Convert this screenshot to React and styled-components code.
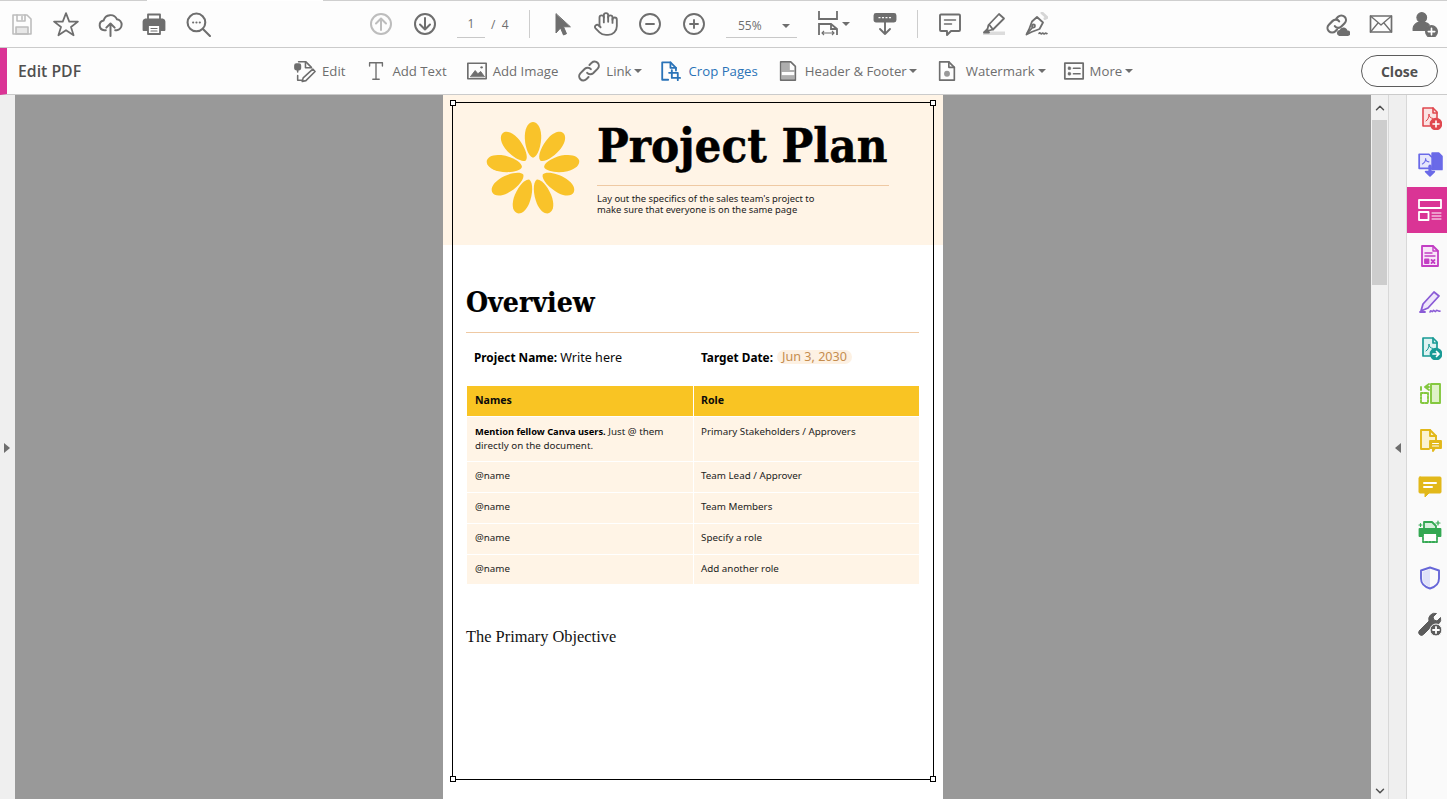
import React from "react"
import styled, { createGlobalStyle } from "styled-components"
import { Hand, CircleMinus, CirclePlus, ChevronUp, ChevronDown } from "lucide-react"

const GREY = "#6e6e6e"
const CREAM = "#fff4e6"
const SANS = `"Open Sans", "Liberation Sans", sans-serif`
const DOC_SANS = `"Noto Sans", "Open Sans", sans-serif`
const DOC_SERIF = `"DejaVu Serif Condensed", "DejaVu Serif", serif`
const BODY_SERIF = `"Liberation Serif", serif`

const GlobalStyle = createGlobalStyle`
  html, body, #root {
    margin: 0;
    height: 100%;
    overflow: hidden;
  }

  * {
    box-sizing: border-box;
  }
`

const Window = styled.div`
  width: 1447px;
  height: 799px;
  display: flex;
  flex-direction: column;
  background: #fff;
  font-family: ${SANS};
  overflow: hidden;
`

const TabEdge = styled.div`
  display: flex;
  height: 1px;
  flex: none;
`

const TabEdgePart = styled.div`
  width: ${(p) => p.$width};
  flex: ${(p) => (p.$grow ? 1 : "none")};
  background: ${(p) => (p.$line ? "#cfcfcf" : "transparent")};
`

const TopBar = styled.div`
  display: flex;
  align-items: center;
  height: 47px;
  flex: none;
  background: #fdfdfd;
  border-bottom: 1px solid #cbcbcb;
`

const IconButton = styled.div`
  width: ${(p) => p.$width || 44}px;
  height: 46px;
  margin-left: ${(p) => p.$ml || 0}px;
  flex: none;
  display: flex;
  align-items: center;
  justify-content: center;
  color: ${(p) => (p.$off ? "#bdbdbd" : GREY)};
`

const PageField = styled.div`
  width: 28px;
  height: 24px;
  margin-left: 10px;
  margin-top: 4px;
  flex: none;
  text-align: center;
  font-size: 12px;
  line-height: 20px;
  color: ${GREY};
  border-bottom: 1px solid #c8c8c8;
`

const PageCount = styled.div`
  width: 24px;
  margin-left: 6px;
  flex: none;
  font-size: 12px;
  color: ${GREY};
  white-space: pre;
`

const Separator = styled.div`
  width: 1px;
  height: 28px;
  margin-left: ${(p) => p.$ml}px;
  flex: none;
  background: #cdcdcd;
`

const ZoomField = styled.div`
  width: 71px;
  height: 24px;
  margin-left: 10px;
  margin-top: 4px;
  padding: 0 7px 0 12px;
  flex: none;
  display: flex;
  align-items: center;
  justify-content: space-between;
  font-size: 12px;
  color: ${GREY};
  border-bottom: 1px solid #c8c8c8;
`

const Caret = styled.span`
  display: inline-block;
  flex: none;
  width: 0;
  height: 0;
  margin-left: ${(p) => p.$ml || 0}px;
  border-left: 4px solid transparent;
  border-right: 4px solid transparent;
  border-top: 4px solid ${GREY};
`

const ToolBar = styled.div`
  display: flex;
  align-items: center;
  height: 47px;
  flex: none;
  background: #fdfdfd;
  border-bottom: 1px solid #cbcbcb;
  border-left: 7px solid #da3495;
`

const ToolTitle = styled.div`
  width: 287px;
  padding-left: 11px;
  flex: none;
  font-size: 15.8px;
  font-weight: 600;
  color: #505050;
`

const Tool = styled.div`
  display: flex;
  align-items: center;
  flex: none;
  margin-left: ${(p) => p.$ml ?? 20}px;
  font-size: 13.2px;
  color: ${(p) => (p.$active ? "#2a73b8" : GREY)};
`

const ToolGlyph = styled.div`
  width: 22px;
  height: 24px;
  margin-right: ${(p) => p.$mr ?? 6}px;
  flex: none;
  display: flex;
  align-items: center;
  justify-content: center;
`

const CloseButton = styled.div`
  width: 77px;
  height: 32px;
  margin-left: auto;
  margin-right: 9px;
  flex: none;
  display: flex;
  align-items: center;
  justify-content: center;
  border: 1px solid #5c5c5c;
  border-radius: 16px;
  font-size: 14px;
  font-weight: 700;
  color: #505050;
`

const Workspace = styled.div`
  flex: 1;
  min-height: 0;
  display: flex;
`

const SideStrip = styled.div`
  width: ${(p) => p.$width}px;
  padding-top: 2px;
  flex: none;
  display: flex;
  align-items: center;
  justify-content: center;
  background: #efefef;
  border-left: ${(p) => (p.$edge ? "1px solid #d8d8d8" : "none")};
  border-right: ${(p) => (p.$edge ? "1px solid #d8d8d8" : "none")};
`

const ArrowLeft = styled.span`
  width: 0;
  height: 0;
  border-top: 5px solid transparent;
  border-bottom: 5px solid transparent;
  border-right: 6px solid ${GREY};
`

const ArrowRight = styled.span`
  width: 0;
  height: 0;
  margin-right: 2px;
  border-top: 5px solid transparent;
  border-bottom: 5px solid transparent;
  border-left: 6px solid ${GREY};
`

const Canvas = styled.div`
  flex: 1;
  min-width: 0;
  display: flex;
  justify-content: center;
  background: #999;
  overflow: hidden;
`

const Page = styled.div`
  position: relative;
  width: 500px;
  flex: none;
  background: #fff;
  color: #0a0a0a;
  font-family: ${DOC_SANS};
`

const CropFrame = styled.div`
  position: absolute;
  left: 9px;
  top: 7px;
  width: 482px;
  height: 678px;
  border: 1px solid #000;
`

const CropHandle = styled.span`
  position: absolute;
  width: 6px;
  height: 6px;
  background: #fff;
  border: 1px solid #000;
  ${(p) => (p.$bottom ? "bottom: -3px;" : "top: -3px;")}
  ${(p) => (p.$right ? "right: -3px;" : "left: -3px;")}
`

const Banner = styled.header`
  height: 150px;
  padding: 23px 0 0 39px;
  display: flex;
  gap: 13px;
  background: ${CREAM};
`

const BannerText = styled.div`
  width: 292px;
  padding-top: 1px;
`

const Title = styled.h1`
  margin: 0;
  font-family: ${DOC_SERIF};
  font-size: 47px;
  line-height: 54px;
  font-weight: 700;
  white-space: nowrap;
  color: #000;
  -webkit-text-stroke: 0.5px #000;
`

const BannerRule = styled.div`
  height: 1px;
  margin-top: 12px;
  background: #efc9a3;
`

const Tagline = styled.p`
  margin: 7px 0 0;
  font-size: 9.4px;
  line-height: 11px;
  color: #1a1a1a;
`

const Section = styled.section`
  padding: 41px 24px 0 23px;
`

const Heading = styled.h2`
  margin: 0;
  font-family: ${DOC_SERIF};
  font-size: 28.2px;
  line-height: 34px;
  font-weight: 700;
  color: #000;
  -webkit-text-stroke: 0.2px #000;
`

const HeadingRule = styled.div`
  height: 1px;
  margin-top: 12px;
  background: #efc9a3;
`

const Strong = styled.b`
  font-weight: 700;
  color: #000;
`

const MetaRow = styled.div`
  display: grid;
  grid-template-columns: 227px 1fr;
  height: 53px;
  padding: 0 0 5px 8px;
  align-items: center;
  font-size: 12.6px;
`

const MetaItem = styled.div`
  display: flex;
  align-items: center;
  white-space: pre;

  ${Strong} {
    font-size: 11.8px;
  }
`

const DatePill = styled.span`
  margin-left: 1px;
  padding: 0 5px;
  height: 14px;
  line-height: 14px;
  border-radius: 7px;
  background: #fdf1e3;
  color: #c58d4e;
`

const Table = styled.div`
  margin-left: 1px;
  display: grid;
  grid-template-columns: 226px 225px;
  column-gap: 1px;
  row-gap: 1px;
  width: 452px;
  font-size: 9.8px;

  > :nth-child(even) {
    padding-left: 7px;
  }
`

const HeadCell = styled.div`
  height: 30px;
  padding: 0 8px 2px;
  display: flex;
  align-items: center;
  background: #f9c423;
  font-size: 10.6px;
  font-weight: 700;
`

const Cell = styled.div`
  height: ${(p) => p.$height || 30}px;
  padding: ${(p) => (p.$tall ? "8px 8px 0" : "0 8px 2px")};
  display: flex;
  flex-direction: column;
  justify-content: ${(p) => (p.$tall ? "flex-start" : "center")};
  background: ${CREAM};
  line-height: 14px;
  color: #222;
`

const CellLine = styled.div`
  white-space: nowrap;

  ${Strong} {
    font-size: 9.3px;
  }
`

const Objective = styled.p`
  margin: 43px 0 0;
  font-family: ${BODY_SERIF};
  font-size: 16.4px;
  line-height: 20px;
  color: #111;
`

const ScrollTrack = styled.div`
  width: 17px;
  flex: none;
  display: flex;
  flex-direction: column;
  align-items: center;
  background: #f1f1f1;
`

const ScrollButton = styled.div`
  height: ${(p) => p.$height}px;
  margin-top: ${(p) => (p.$end ? "auto" : 0)};
  display: flex;
  align-items: center;
  color: #505050;
`

const ScrollThumb = styled.div`
  width: 15px;
  height: 165px;
  background: #cdcdcd;
`

const ToolsPane = styled.aside`
  width: 40px;
  flex: none;
  display: flex;
  flex-direction: column;
  background: #fafafa;
`

const PaneItem = styled.div`
  height: 46px;
  flex: none;
  display: flex;
  align-items: center;
  justify-content: center;
  padding-left: 6px;
  background: ${(p) => (p.$active ? "#da3495" : "transparent")};
`

const Svg = ({ size = 24, children, color = "currentColor", sw = 1.8 }) => (
  <svg
    width={size}
    height={size}
    viewBox="0 0 24 24"
    fill="none"
    stroke={color}
    strokeWidth={sw}
    strokeLinejoin="round"
    strokeLinecap="round"
  >
    {children}
  </svg>
)

const SaveIcon = () => (
  <Svg sw={1.6}>
    <path d="M3 3h14l4 4v15H3z" />
    <path d="M7 3v6h8V3M12 4.500v3" />
    <path d="M6 15h12v7H6z" fill="currentColor" fillOpacity=".35" />
  </Svg>
)

const StarIcon = () => (
  <Svg size={26} sw={1.6}>
    <path d="M12 2l3 7.800h8l-6.400 5 2.400 7.600-7-4.700-7 4.700 2.400-7.600L1 9.800h8z" />
  </Svg>
)

const UploadIcon = () => (
  <Svg size={25} sw={1.9}>
    <path d="M7.500 17.500H6a4.700 4.700 0 0 1-.6-9.300A6.800 6.800 0 0 1 18.200 7a5.300 5.300 0 0 1-.2 10.500h-1.500" />
    <path d="M12 23V11.500M8 15l4-4 4 4" />
  </Svg>
)

const PrintIcon = () => (
  <Svg sw={1.8}>
    <path d="M6 7V2.500h12V7" />
    <path d="M3 7.500h18a2 2 0 0 1 1.500 2V18H1.500V9.500A2 2 0 0 1 3 7.500z" fill="currentColor" />
    <path d="M6 13h12v9H6z" fill="#fff" />
    <path d="M9 16.500h6M9 19h6" strokeWidth="1.200" />
  </Svg>
)

const FindIcon = () => (
  <Svg size={25} sw={2}>
    <circle cx="10" cy="10" r="8.500" />
    <path d="M16.500 16.500l6.500 6.500" />
    <path d="M6.800 10h.1M10 10h.1M13.200 10h.1" />
  </Svg>
)

const ArrowCircle = ({ up }) => (
  <Svg size={24} sw={2}>
    <circle cx="12" cy="12" r="10" />
    <path d={up ? "M12 18V6.500M7 11.500l5-5 5 5" : "M12 6v11.500M7 12.500l5 5 5-5"} />
  </Svg>
)

const PointerIcon = () => (
  <Svg sw={1}>
    <path d="M6 2v19l4.500-5 3 7 3-1.300-3-6.900h6.500z" fill="currentColor" />
  </Svg>
)

const FitIcon = () => (
  <svg width="24" height="26" viewBox="0 0 24 26" fill="none" stroke="currentColor" strokeWidth="1.800">
    <path d="M3 0v8h18V0" />
    <path d="M3 24v-11h12l6 5v6M15 13v5h6" />
    <path d="M6 22h12M8 20l-2 2 2 2M16 20l2 2-2 2" strokeWidth="1.100" />
  </svg>
)

const ReadIcon = () => (
  <Svg sw={1.9}>
    <rect x="1.500" y="2" width="21" height="7.500" rx="1.500" fill="currentColor" />
    <path d="M6 5.700h1M9.500 5.700h1M13 5.700h1M16.500 5.700h1" stroke="#fff" strokeWidth="1.300" />
    <path d="M12 10v12M7 17l5 5 5-5" />
  </Svg>
)

const CommentIcon = () => (
  <Svg sw={1.9}>
    <path d="M3 2.500h18a1 1 0 0 1 1 1V18a1 1 0 0 1-1 1h-8l-4 4v-4H3a1 1 0 0 1-1-1V3.500a1 1 0 0 1 1-1z" />
    <path d="M6.500 8h11M6.500 12h7" strokeWidth="1.500" />
  </Svg>
)

const HighlightIcon = () => (
  <Svg sw={1.8}>
    <path d="M1 19.500h22V23H1z" fill="#dcdcdc" stroke="none" />
    <path d="M17 2l5 4.500-11 11-6 1.500 1.500-6z" fill="#fff" />
    <path d="M7.500 13l3.500 4.500" />
    <path d="M2 20.500l3-3 2 3z" fill="currentColor" />
  </Svg>
)

const SignIcon = () => (
  <Svg sw={1.8}>
    <path d="M18 1l5 4.500-2 1" stroke="#d6d6d6" strokeWidth="3" />
    <path d="M13 5l6 5.500-3.500 6.500-8 3-5 2.500 2.500-5 3-8z" />
    <circle cx="9.500" cy="14" r="1.500" />
    <path d="M3 21.500l5.500-6" />
    <path d="M15 21.500c1-2 2 1.500 3 0s2 1.500 3 0 1.500.5 2 0" strokeWidth="1.600" />
  </Svg>
)

const CloudLinkIcon = () => (
  <Svg size={26} sw={2}>
    <path d="M10 14a4 4 0 0 0 6 .4l3-3a4.200 4.200 0 0 0-6-6l-1.500 1.500" />
    <path d="M14 9.500a4 4 0 0 0-6-.4l-3.500 3.500a4.200 4.200 0 0 0 6 6l1.500-1.500" />
    <path d="M14 23a2.800 2.800 0 0 1 .4-5.500 3.800 3.800 0 0 1 7.200.5 2.500 2.500 0 0 1 .4 5z" fill="currentColor" stroke="none" />
  </Svg>
)

const MailIcon = () => (
  <Svg sw={1.700}>
    <rect x="1.500" y="4" width="21" height="16" />
    <path d="M1.500 4l10.500 9 10.500-9M1.500 20l7.500-9M22.500 20l-7.500-9" strokeWidth="1.300" />
  </Svg>
)

const AddUserIcon = () => (
  <Svg size={26} sw={1}>
    <circle cx="9" cy="6" r="4.500" fill="currentColor" />
    <path d="M1 18v-2c0-3 3-5 5-5.500h6c2 .5 3.500 1.500 4 2.500a7 7 0 0 0-3 5z" fill="currentColor" />
    <circle cx="18" cy="19" r="5.500" fill="currentColor" />
    <path d="M18 16v6M15 19h6" stroke="#fff" strokeWidth="1.500" />
  </Svg>
)

const EditIcon = () => (
  <Svg sw={1.700}>
    <path d="M5 2h8l6 6" />
    <path d="M12.500 2v6.500H19" />
    <path d="M4 11v2M4 17v5h7" />
    <rect x="1" y="4.500" width="6" height="6" rx="1.500" fill="currentColor" />
    <path d="M20.500 10l2.500 2.500L13 22.500l-4 1 1-4z" fill="#fff" />
  </Svg>
)

const TextIcon = () => (
  <Svg sw={1.500}>
    <path d="M5 6.500V3h14v3.500M12 3v18M8.500 21h7" />
  </Svg>
)

const ImageIcon = () => (
  <Svg sw={1.800}>
    <rect x="2" y="3.500" width="20" height="17" />
    <path d="M5 18l5-6.500 3 3.500 3-2.500 4 5.500z" fill="currentColor" strokeWidth="1" />
    <circle cx="17" cy="8" r="1.300" fill="currentColor" stroke="none" />
  </Svg>
)

const LinkIcon = () => (
  <Svg sw={2.200}>
    <path d="M10 14a4.500 4.500 0 0 0 6.500.4l5-5a4.600 4.600 0 0 0-6.500-6.500l-2.500 2.500" />
    <path d="M14 10a4.500 4.500 0 0 0-6.500-.4l-5 5a4.600 4.600 0 0 0 6.500 6.500l2.500-2.500" />
  </Svg>
)

const CropIcon = () => (
  <Svg sw={2} color="#2a73b8">
    <path d="M10 21.500H3.500v-19h9l6 6v3" />
    <path d="M12.500 2.500v6h6" />
    <path d="M11 14h9.500v8M14 11v8.500h9" />
  </Svg>
)

const HeaderIcon = () => (
  <Svg sw={1.800}>
    <path d="M4 2h11l5 5v15H4z" />
    <path d="M5 3h9v8h5v2H5z" fill="currentColor" fillOpacity=".55" stroke="none" />
    <path d="M5 16.500h14V21H5z" fill="currentColor" fillOpacity=".55" stroke="none" />
  </Svg>
)

const WatermarkIcon = () => (
  <Svg sw={1.800}>
    <path d="M4 2h10l6 6v14H4z" />
    <path d="M14 2v6h6" />
    <circle cx="12" cy="15" r="3.200" fill="currentColor" fillOpacity=".7" stroke="none" />
  </Svg>
)

const MoreIcon = () => (
  <Svg sw={1.900}>
    <rect x="2" y="3.500" width="20" height="17" />
    <rect x="5.500" y="7.500" width="3" height="3" rx="1" fill="currentColor" strokeWidth=".5" />
    <rect x="5.500" y="13.500" width="3" height="3" rx="1" fill="currentColor" strokeWidth=".5" />
    <path d="M11.500 9h7M11.500 15h7" />
  </Svg>
)

const Flower = () => (
  <svg width="102" height="102" viewBox="-50 -50 100 100">
    {[0, 40, 80, 120, 160, 200, 240, 280, 320].map((angle) => (
      <path
        key={angle}
        transform={`rotate(${angle})`}
        d="M0-11C-5-12-8.500-24-8-33-7.500-42-3.500-46 0-46S7.500-42 8-33C8.500-24 5-12 0-11z"
        fill="#f9c32a"
      />
    ))}
  </svg>
)

const PaneIcons = [
  <Svg key="create" color="#e0484f" sw={1.600}>
    <path d="M12 20H5V2h10l4 4v6" fill="#fbe3e3" />
    <path d="M15 2v5h4" />
    <path d="M8 15c2-1 3-4 3-7 0 3 1.500 4 4 4.500" strokeWidth="1" />
    <circle cx="18" cy="18" r="5.500" fill="#e0484f" />
    <path d="M18 15v6M15 18h6" stroke="#fff" />
  </Svg>,
  <Svg key="combine" color="#6a6ae8" size={26} sw={1.600}>
    <path d="M14 2h6l3 3v12h-9z" fill="#6a6ae8" />
    <path d="M2 3h9l3 3v10H2z" fill="#e6e6fb" />
    <path d="M5 12c2-1 3-3 3-5 0 2 1 3 3 3" strokeWidth="1" />
    <path d="M12 14v6" strokeWidth="3" />
    <path d="M8 19h8l-4 4z" fill="#6a6ae8" />
  </Svg>,
  <Svg key="layout" color="#fff" sw={1.800}>
    <rect x="1" y="2" width="22" height="8" />
    <rect x="1" y="14" width="9.500" height="8" />
    <path d="M14 15h9M14 18h9M14 21h9" strokeWidth="1" />
  </Svg>,
  <Svg key="form" color="#c23fc4" sw={1.800}>
    <path d="M4 2h11l5 5v15H4z" fill="#f9e6f9" />
    <path d="M15 2v5h5M7 9h7M7 12h10" strokeWidth="1.400" />
    <path d="M7 15.500h3.500V19H7z" fill="#c23fc4" />
    <path d="M13.500 16l3 3M16.500 16l-3 3" />
  </Svg>,
  <Svg key="sign" color="#8a5bd6" sw={1.800}>
    <path d="M16 2l5 4-11 12-7 3 2-7z" fill="#eee6fb" />
    <path d="M2 22h5" />
    <path d="M12 22c1-3 2 1 3-1s2 2 3 0 2 1 4 0" strokeWidth="1.600" />
  </Svg>,
  <Svg key="export" color="#199a95" sw={1.700}>
    <path d="M12 20H5V2h10l4 4v6" fill="#dff3f2" />
    <path d="M15 2v5h4" />
    <path d="M8 15c2-1 3-4 3-7 0 3 1.500 4 4 4.500" strokeWidth="1" />
    <circle cx="18" cy="18" r="5.500" fill="#199a95" />
    <path d="M15 18h6M18.500 15.500L21 18l-2.500 2.500" stroke="#fff" />
  </Svg>,
  <Svg key="organize" color="#84c83f" sw={1.900}>
    <rect x="13" y="2" width="9" height="19" fill="#dff2c8" />
    <path d="M3 11h7v10H3z" strokeDasharray="2 1.500" />
    <path d="M3 8V5M11 2L7 5l4 3M7 5h4" />
  </Svg>,
  <Svg key="comment-doc" color="#e2b81a" sw={1.900}>
    <path d="M11 21H3V2h9l6 6v4" fill="#fbf3cf" />
    <path d="M12 2v6h6" />
    <path d="M12 13h11v7h-6l-2 3v-3h-3z" fill="#e2b81a" />
    <path d="M14.500 15.500h6M14.500 18h6" stroke="#fff" strokeWidth="1.100" />
  </Svg>,
  <Svg key="comment" color="#e2b81a" sw={1}>
    <path d="M2 3h20a1 1 0 0 1 1 1v14a1 1 0 0 1-1 1H11l-4 4v-4H2a1 1 0 0 1-1-1V4a1 1 0 0 1 1-1z" fill="#e2b81a" />
    <path d="M6 9h12M6 13h8" stroke="#fff" strokeWidth="2" />
  </Svg>,
  <Svg key="scan" color="#33a852" sw={1.800}>
    <path d="M6 9V2h8l4 4v3" fill="#d7f0dd" />
    <path d="M1.500 9h21v7h-21z" fill="#33a852" />
    <path d="M5 14v8h14v-8" fill="#fff" strokeDasharray="2 1.500" />
    <path d="M20 1v4M18 3h4M1 5h3M2.500 3.500v3" strokeWidth="1.200" />
  </Svg>,
  <Svg key="protect" color="#6767d8" sw={1.900}>
    <path d="M12 1.500l9 3v8c0 5-4 8.500-9 10-5-1.500-9-5-9-10v-8z" />
    <path d="M12 3v18c-4-1.500-7.500-4-7.500-8.500V6z" fill="#dfe1f9" stroke="none" />
  </Svg>,
  <Svg key="tools" color="#5c5c5c" sw={1}>
    <path d="M1.500 18.500L11 9a6 6 0 0 1 7.500-7.500L15 5l1 3 3 1 3.500-3.500a6 6 0 0 1-7.500 7.500l-9.500 9.500a2.800 2.800 0 0 1-4-4z" fill="#5c5c5c" />
    <circle cx="18" cy="18" r="6" fill="#5c5c5c" stroke="#fafafa" />
    <path d="M18 15v6M15 18h6" stroke="#fff" strokeWidth="1.800" />
  </Svg>
]

const rows = [
  ["@name", "Team Lead / Approver", 30],
  ["@name", "Team Members", 30],
  ["@name", "Specify a role", 30],
  ["@name", "Add another role", 29]
]

const App = () => (
  <Window>
    <GlobalStyle />
    <TabEdge>
      <TabEdgePart $width="147px" $line />
      <TabEdgePart $width="176px" />
      <TabEdgePart $grow $line />
    </TabEdge>

    <TopBar>
      <IconButton $off><SaveIcon /></IconButton>
      <IconButton><StarIcon /></IconButton>
      <IconButton><UploadIcon /></IconButton>
      <IconButton><PrintIcon /></IconButton>
      <IconButton><FindIcon /></IconButton>
      <IconButton $ml={139} $off><ArrowCircle up /></IconButton>
      <IconButton><ArrowCircle /></IconButton>
      <PageField>1</PageField>
      <PageCount>/  4</PageCount>
      <Separator $ml={14} />
      <IconButton $ml={10}><PointerIcon /></IconButton>
      <IconButton><Hand size={26} strokeWidth={1.700} /></IconButton>
      <IconButton><CircleMinus size={24} strokeWidth={1.900} /></IconButton>
      <IconButton><CirclePlus size={24} strokeWidth={1.900} /></IconButton>
      <ZoomField>
        55%
        <Caret />
      </ZoomField>
      <IconButton $ml={19} $width={24}><FitIcon /></IconButton>
      <Caret $ml={2} />
      <IconButton $ml={23} $width={24}><ReadIcon /></IconButton>
      <Separator $ml={20} />
      <IconButton $ml={10}><CommentIcon /></IconButton>
      <IconButton><HighlightIcon /></IconButton>
      <IconButton $ml={-2}><SignIcon /></IconButton>
      <IconButton $ml={257}><CloudLinkIcon /></IconButton>
      <IconButton><MailIcon /></IconButton>
      <IconButton><AddUserIcon /></IconButton>
    </TopBar>

    <ToolBar>
      <ToolTitle>Edit PDF</ToolTitle>
      <Tool $ml={0}><ToolGlyph><EditIcon /></ToolGlyph>Edit</Tool>
      <Tool><ToolGlyph $mr={5}><TextIcon /></ToolGlyph>Add Text</Tool>
      <Tool $ml={19}><ToolGlyph $mr={5}><ImageIcon /></ToolGlyph>Add Image</Tool>
      <Tool $ml={20}><ToolGlyph><LinkIcon /></ToolGlyph>Link<Caret $ml={2} /></Tool>
      <Tool $ml={17} $active><ToolGlyph $mr={8}><CropIcon /></ToolGlyph>Crop Pages</Tool>
      <Tool $ml={19}><ToolGlyph><HeaderIcon /></ToolGlyph>Header &amp; Footer<Caret $ml={2} /></Tool>
      <Tool $ml={19}><ToolGlyph $mr={8}><WatermarkIcon /></ToolGlyph>Watermark<Caret $ml={3} /></Tool>
      <Tool $ml={17}><ToolGlyph $mr={5}><MoreIcon /></ToolGlyph>More<Caret $ml={3} /></Tool>
      <CloseButton>Close</CloseButton>
    </ToolBar>

    <Workspace>
      <SideStrip $width={15}><ArrowRight /></SideStrip>
      <Canvas>
        <Page>
          <Banner>
            <Flower />
            <BannerText>
              <Title>Project Plan</Title>
              <BannerRule />
              <Tagline>
                Lay out the specifics of the sales team's project to
                <br />
                make sure that everyone is on the same page
              </Tagline>
            </BannerText>
          </Banner>
          <Section>
            <Heading>Overview</Heading>
            <HeadingRule />
            <MetaRow>
              <MetaItem><Strong>Project Name: </Strong>Write here</MetaItem>
              <MetaItem><Strong>Target Date: </Strong><DatePill>Jun 3, 2030</DatePill></MetaItem>
            </MetaRow>
            <Table>
              <HeadCell>Names</HeadCell>
              <HeadCell>Role</HeadCell>
              <Cell $tall $height={44}>
                <CellLine><Strong>Mention fellow Canva users.</Strong> Just @ them</CellLine>
                <CellLine>directly on the document.</CellLine>
              </Cell>
              <Cell $tall $height={44}>
                <CellLine>Primary Stakeholders / Approvers</CellLine>
              </Cell>
              {rows.map(([name, role, height]) => (
                <React.Fragment key={role}>
                  <Cell $height={height}>{name}</Cell>
                  <Cell $height={height}>{role}</Cell>
                </React.Fragment>
              ))}
            </Table>
            <Objective>The Primary Objective</Objective>
          </Section>
          <CropFrame>
            <CropHandle />
            <CropHandle $right />
            <CropHandle $bottom />
            <CropHandle $bottom $right />
          </CropFrame>
        </Page>
      </Canvas>
      <ScrollTrack>
        <ScrollButton $height={25}><ChevronUp size={14} strokeWidth={2.500} /></ScrollButton>
        <ScrollThumb />
        <ScrollButton $end $height={17}><ChevronDown size={14} strokeWidth={2.500} /></ScrollButton>
      </ScrollTrack>
      <SideStrip $width={19} $edge><ArrowLeft /></SideStrip>
      <ToolsPane>
        {PaneIcons.map((icon, i) => (
          <PaneItem key={icon.key} $active={i === 2}>{icon}</PaneItem>
        ))}
      </ToolsPane>
    </Workspace>
  </Window>
)

export default App
